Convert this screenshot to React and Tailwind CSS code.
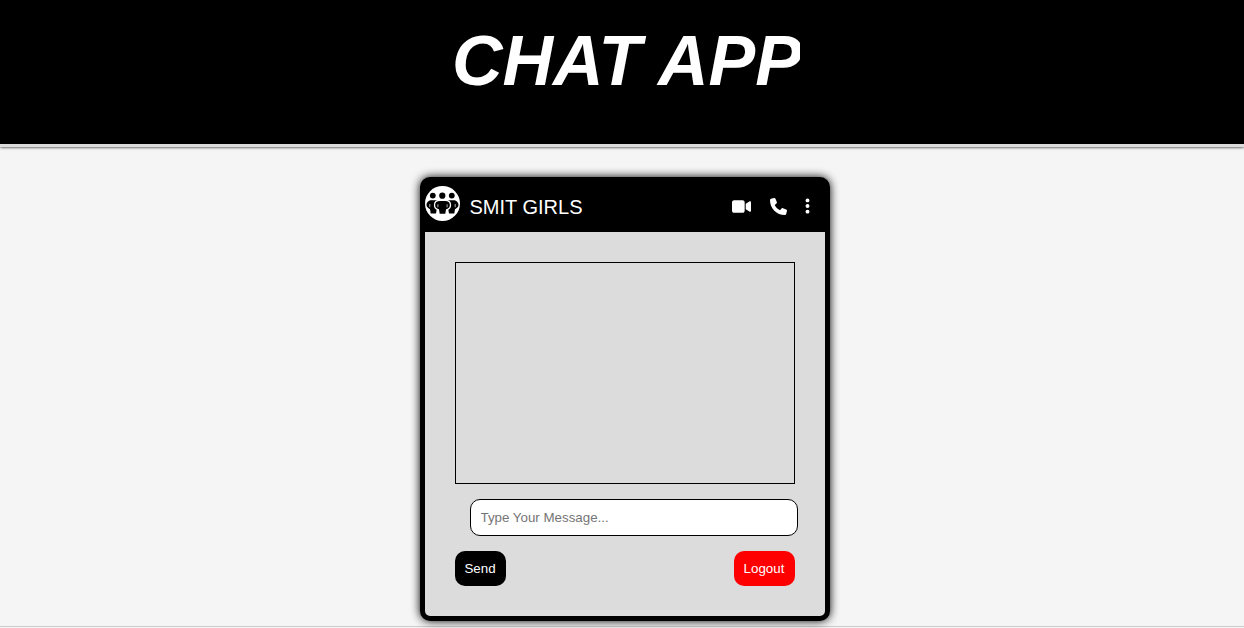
import React from "react";
import { FaVideo, FaPhone, FaEllipsisVertical } from "react-icons/fa6";

function GroupIcon() {
  return (
    <svg viewBox="0 0 35 35" className="h-[35px] w-[35px]">
      <circle cx="17.5" cy="17.5" r="17.5" fill="#fff" />
      <g fill="#000">
        <circle cx="7.800" cy="9.600" r="2.900" />
        <circle cx="26.800" cy="9.600" r="2.900" />
        <path d="M6.500 14.200h4c1.200 0 2 .5 2.600 1.300-2.600 1.800-3.300 5-1.400 8L11 27.500H5.700L5 23.200C3 22.300 1.500 20.800 1.500 18.800c0-2.800 2.500-4.600 5-4.600z" />
        <path d="M28.500 14.200h-4c-1.200 0-2 .5-2.600 1.300 2.600 1.800 3.300 5 1.400 8l.7 4h5.300l.7-4.300c2-.9 3.500-2.400 3.500-4.400 0-2.800-2.500-4.600-5-4.600z" />
      </g>
      <path
        d="M15 14.300h5c3.400 0 5.500 1.900 5.500 4.700 0 2.300-1.500 4.100-3.900 4.800l-.8 4.700h-6.600l-.8-4.700c-2.400-.7-3.900-2.500-3.900-4.800 0-2.800 2.100-4.700 5.500-4.700z"
        fill="#000"
        stroke="#fff"
        strokeWidth="1.300"
      />
      <circle cx="17.300" cy="9.700" r="3.100" fill="#000" />
      <path d="M4.800 18v3.200M30.200 18v3.200M12.900 18.300v3M22.100 18.300v3" stroke="#fff" strokeWidth="0.7" />
    </svg>
  );
}

export default function App() {
  return (
    <div className="flex h-[628px] flex-col overflow-hidden bg-[#f5f5f5] font-['Liberation_Sans',sans-serif]">
      <header className="flex h-[147px] shrink-0 justify-center border-b-[3px] border-[#dcdcdc] bg-black pt-[21px] pl-[9px] shadow-[0_0_3px_#000]">
        <h1 className="h-20 w-[347px] overflow-hidden indent-[-1px] text-[70px] leading-[80px] font-bold whitespace-nowrap italic text-white">CHAT APP</h1>
      </header>
      <main className="flex h-[480px] shrink-0 justify-center border-b border-[#ccc] pt-[30px] pl-[6px]">
        <section className="flex h-[444px] w-[410px] flex-col rounded-[10px] border-[5px] border-black bg-[#dcdcdc] shadow-[0_0_10px_#000]">
          <div className="flex h-[50px] shrink-0 items-start bg-black pt-1 text-white">
            <GroupIcon />
            <span className="ml-[9.5px] pt-[9px] text-[20px] leading-[25px]">SMIT GIRLS</span>
            <div className="mr-[13px] ml-auto flex items-center pt-[11px]">
              <FaVideo className="h-[17px] w-[19px]" />
              <FaPhone className="ml-[19px] h-[17px] w-[17px]" />
              <FaEllipsisVertical className="ml-[16px] h-[18px] w-[9px]" />
            </div>
          </div>
          <div className="flex grow flex-col px-[30px] pt-[30px]">
            <div className="h-[222px] border border-black" />
            <input
              className="mt-[15px] ml-[15px] h-[37px] w-[328px] rounded-[10px] border border-black bg-white pr-[10px] pl-[9.5px] text-[13.333px] outline-none placeholder:text-[#757575]"
              placeholder="Type Your Message..."
            />
            <div className="mt-[15px] flex justify-between text-[13.333px] leading-[15px] text-white">
              <button className="h-[35px] w-[51px] rounded-[10px] bg-black pr-px">Send</button>
              <button className="h-[35px] w-[61px] rounded-[10px] bg-[#ff0000] pr-px">Logout</button>
            </div>
          </div>
        </section>
      </main>
    </div>
  );
}
